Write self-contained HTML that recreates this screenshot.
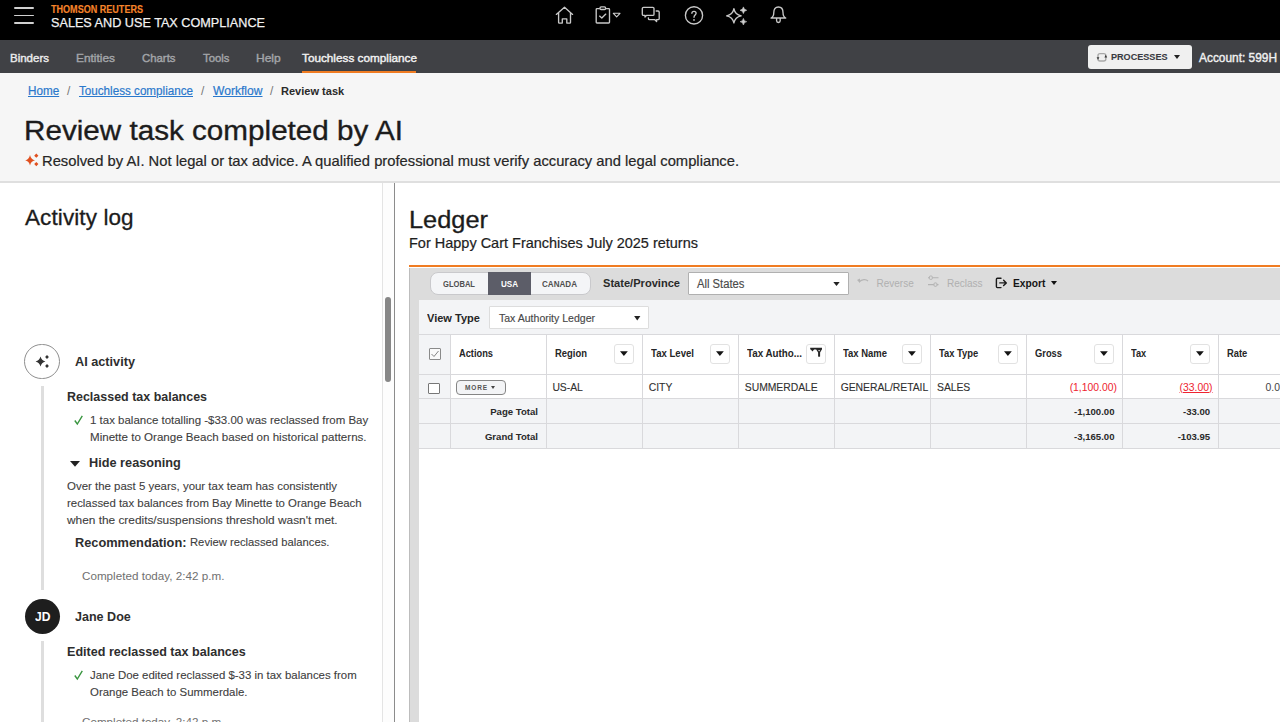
<!DOCTYPE html>
<html><head><meta charset="utf-8">
<style>
*{box-sizing:border-box;margin:0;padding:0}
html,body{width:1280px;height:722px;overflow:hidden;background:#fff;font-family:"Liberation Sans",sans-serif;color:#222}
.t{position:absolute;line-height:1;white-space:nowrap}
.r{position:absolute}
svg{position:absolute;overflow:visible}
</style></head><body>
<div class="r" style="left:0px;top:0px;width:1280px;height:40px;background:#000;"></div>
<div class="r" style="left:14px;top:6.8px;width:20px;height:1.8px;background:#d0d0d0;border-radius:1px"></div>
<div class="r" style="left:14px;top:14.6px;width:20px;height:1.8px;background:#d0d0d0;border-radius:1px"></div>
<div class="r" style="left:14px;top:22.4px;width:20px;height:1.8px;background:#d0d0d0;border-radius:1px"></div>
<div class="t" style="left:51px;top:3.91px;font-size:10.5px;color:#f5842a;font-weight:bold;letter-spacing:0px;-webkit-text-stroke:0.15px #f5842a;transform:scaleX(0.8617);transform-origin:left 0">THOMSON REUTERS</div>
<div class="t" style="left:51px;top:16.17px;font-size:13.5px;color:#f2f2f2;font-weight:normal;letter-spacing:0px;-webkit-text-stroke:0.25px #f2f2f2;transform:scaleX(0.9372);transform-origin:left 0">SALES AND USE TAX COMPLIANCE</div>
<svg style="left:550px;top:0px" width="30" height="30" viewBox="550 0 30 30"><path fill="none" stroke="#c8c8c8" stroke-width="1.35" stroke-linejoin="round" stroke-linecap="round" d="M556.3 14.4 L564.5 7.3 L572.6 14.4 M558.6 12.6 V22.4 Q558.6 23.1 559.3 23.1 H562.3 V18.9 H566.8 V23.1 H569.8 Q570.5 23.1 570.5 22.4 V12.6"/></svg><svg style="left:590px;top:0px" width="36" height="30" viewBox="590 0 36 30"><path fill="none" stroke="#c8c8c8" stroke-width="1.35" stroke-linejoin="round" stroke-linecap="round" d="M599.3 8.6 H597 Q596.2 8.6 596.2 9.4 V22.2 Q596.2 23 597 23 H608.7 Q609.5 23 609.5 22.2 V9.4 Q609.5 8.6 608.7 8.6 H606.4"/><rect x="600" y="6.9" width="5.6" height="2.6" rx="1.1" fill="none" stroke="#c8c8c8" stroke-width="1.35" stroke-linejoin="round" stroke-linecap="round"/><path fill="none" stroke="#c8c8c8" stroke-width="1.35" stroke-linejoin="round" stroke-linecap="round" d="M599.6 16.1 L601.8 18 L605.8 14.1"/><path d="M613.3 13.3 H620 L616.65 16.8 Z" fill="none" stroke="#cfcfcf" stroke-width="1.1" stroke-linejoin="round"/></svg><svg style="left:636px;top:0px" width="30" height="30" viewBox="636 0 30 30"><path fill="none" stroke="#c8c8c8" stroke-width="1.35" stroke-linejoin="round" stroke-linecap="round" d="M643.5 7.3 H652.8 Q654 7.3 654 8.5 V14.2 Q654 15.4 652.8 15.4 H646.5 L645 17 V15.4 H643.5 Q642.3 15.4 642.3 14.2 V8.5 Q642.3 7.3 643.5 7.3 Z M656.2 11 H658 Q659.2 11 659.2 12.2 V18.4 Q659.2 19.6 658 19.6 H656.6 V21.6 L654.6 19.6 H649.6 Q648.4 19.6 648.4 18.4 V17.8"/></svg><svg style="left:680px;top:0px" width="30" height="30" viewBox="680 0 30 30"><circle cx="694" cy="15.4" r="8.6" fill="none" stroke="#c8c8c8" stroke-width="1.35" stroke-linejoin="round" stroke-linecap="round"/><path fill="none" stroke="#c8c8c8" stroke-width="1.35" stroke-linejoin="round" stroke-linecap="round" d="M691.9 13.3 C691.9 10.7 696.1 10.7 696.1 13.3 C696.1 15 694 15.1 694 17.2"/><circle cx="694" cy="19.9" r="0.85" fill="#cfcfcf"/></svg><svg style="left:720px;top:0px" width="30" height="30" viewBox="720 0 30 30"><path fill="none" stroke="#c8c8c8" stroke-width="1.35" stroke-linejoin="round" stroke-linecap="round" d="M733.9 8.6 Q735 14.7 741.2 15.8 Q735 16.9 733.9 23 Q732.8 16.9 726.6 15.8 Q732.8 14.7 733.9 8.6 Z"/><path d="M743.4 6.9 Q743.8 9.8 746.7 10.25 Q743.8 10.7 743.4 13.6 Q743 10.7 740.1 10.25 Q743 9.8 743.4 6.9 Z M743.4 18.4 Q743.8 21.3 746.7 21.7 Q743.8 22.1 743.4 25 Q743 22.1 740.1 21.7 Q743 21.3 743.4 18.4 Z" fill="#cfcfcf" stroke="#cfcfcf" stroke-width="0.6" stroke-linejoin="round"/></svg><svg style="left:765px;top:0px" width="30" height="30" viewBox="765 0 30 30"><path fill="none" stroke="#c8c8c8" stroke-width="1.35" stroke-linejoin="round" stroke-linecap="round" d="M771 18 Q773.8 16.6 773.8 12.4 Q773.8 7 778.4 7 Q783 7 783 12.4 Q783 16.6 785.8 18 Z M776.6 18.3 V20.7 A1.8 1.8 0 0 0 780.2 20.7 V18.3"/></svg><div class="r" style="left:0px;top:40px;width:1280px;height:33.3px;background:#404145;"></div>
<div class="t" style="left:10px;top:52.38px;font-size:11.6px;color:#ececec;font-weight:normal;letter-spacing:0px;-webkit-text-stroke:0.4px #ececec;transform:scaleX(0.9921);transform-origin:left 0">Binders</div>
<div class="t" style="left:76px;top:52.38px;font-size:11.6px;color:#a3a5a9;font-weight:normal;letter-spacing:0px;-webkit-text-stroke:0.4px #a3a5a9;transform:scaleX(1.0255);transform-origin:left 0">Entities</div>
<div class="t" style="left:142px;top:52.38px;font-size:11.6px;color:#a3a5a9;font-weight:normal;letter-spacing:0px;-webkit-text-stroke:0.4px #a3a5a9;transform:scaleX(0.9808);transform-origin:left 0">Charts</div>
<div class="t" style="left:203px;top:52.38px;font-size:11.6px;color:#a3a5a9;font-weight:normal;letter-spacing:0px;-webkit-text-stroke:0.4px #a3a5a9;transform:scaleX(0.9786);transform-origin:left 0">Tools</div>
<div class="t" style="left:256px;top:52.38px;font-size:11.6px;color:#a3a5a9;font-weight:normal;letter-spacing:0px;-webkit-text-stroke:0.4px #a3a5a9;transform:scaleX(1.0373);transform-origin:left 0">Help</div>
<div class="t" style="left:302px;top:52.38px;font-size:11.6px;color:#f2f2f2;font-weight:normal;letter-spacing:0px;-webkit-text-stroke:0.4px #f2f2f2;transform:scaleX(1.0139);transform-origin:left 0">Touchless compliance</div>
<div class="r" style="left:302px;top:71px;width:114px;height:3px;background:#f07c22;"></div>
<div class="r" style="left:1088px;top:45px;width:104px;height:24px;background:#f0f0f0;border-radius:3px"></div>
<svg style="left:1090px;top:46px" width="20" height="20" viewBox="1090 46 20 20"><rect x="1098" y="53.6" width="7.8" height="7.4" rx="2" fill="none" stroke="#a8a8a8" stroke-width="1.4"/><path d="M1096.6 57.2 L1099.4 57.2 L1098 59.8 Z M1104.4 57.4 L1107.2 57.4 L1105.8 54.8 Z" fill="#3a3a3a"/></svg><div class="t" style="left:1111px;top:52.88px;font-size:9px;color:#3a3b42;font-weight:bold;letter-spacing:0px;-webkit-text-stroke:0.1px #3a3b42;transform:scaleX(1.0084);transform-origin:left 0">PROCESSES</div>
<svg style="left:1173.5px;top:55px" width="6" height="4" viewBox="0 0 6 4"><path d="M0 0 H6 L3 4 Z" fill="#222"/></svg>
<div class="t" style="left:1198.8px;top:52.22px;font-size:12.5px;color:#f0f0f0;font-weight:normal;letter-spacing:0px;-webkit-text-stroke:0.4px #f0f0f0;transform:scaleX(0.9512);transform-origin:left 0">Account: 599H</div>
<div class="r" style="left:0px;top:73px;width:1280px;height:109px;background:#f6f6f6;"></div>
<div class="r" style="left:0px;top:181.4px;width:1280px;height:1.3px;background:#dfdfdf;"></div>
<div class="t" style="left:28.2px;top:85.44px;font-size:12px;color:#2a78cc;font-weight:normal;letter-spacing:0px;text-decoration:underline;-webkit-text-stroke:0.2px #2a78cc;transform:scaleX(0.9745);transform-origin:left 0">Home</div>
<div class="t" style="left:67px;top:85.44px;font-size:12px;color:#777;font-weight:normal;letter-spacing:0px;">/</div>
<div class="t" style="left:79px;top:85.44px;font-size:12px;color:#2a78cc;font-weight:normal;letter-spacing:0px;text-decoration:underline;-webkit-text-stroke:0.2px #2a78cc;transform:scaleX(0.9710);transform-origin:left 0">Touchless compliance</div>
<div class="t" style="left:201px;top:85.44px;font-size:12px;color:#777;font-weight:normal;letter-spacing:0px;">/</div>
<div class="t" style="left:212.5px;top:85.44px;font-size:12px;color:#2a78cc;font-weight:normal;letter-spacing:0px;text-decoration:underline;-webkit-text-stroke:0.2px #2a78cc;transform:scaleX(1.0076);transform-origin:left 0">Workflow</div>
<div class="t" style="left:270px;top:85.44px;font-size:12px;color:#777;font-weight:normal;letter-spacing:0px;">/</div>
<div class="t" style="left:281.2px;top:85.87px;font-size:11.5px;color:#2a2a2a;font-weight:bold;letter-spacing:0px;;transform:scaleX(0.9596);transform-origin:left 0">Review task</div>
<div class="t" style="left:24px;top:118.14px;font-size:27px;color:#1c1c1c;font-weight:normal;letter-spacing:0px;-webkit-text-stroke:0.35px #1c1c1c;transform:scaleX(1.0980);transform-origin:left 0">Review task completed by AI</div>
<svg style="left:20px;top:150px" width="22" height="20" viewBox="20 150 22 20"><path d="M30 155 Q30.9 159.4 35 160.3 Q30.9 161.2 30 165.6 Q29.1 161.2 25.2 160.3 Q29.1 159.4 30 155 Z" fill="#e0501f"/><path d="M36.3 153.6 L38.4 155.7 L36.3 157.8 L34.2 155.7 Z M36.3 162 L38.4 164.1 L36.3 166.2 L34.2 164.1 Z" fill="#e0501f"/></svg><div class="t" style="left:42px;top:152.60px;font-size:15px;color:#262626;font-weight:normal;letter-spacing:0px;-webkit-text-stroke:0.2px #262626;transform:scaleX(0.9835);transform-origin:left 0">Resolved by AI. Not legal or tax advice. A qualified professional must verify accuracy and legal compliance.</div>
<div class="r" style="left:0px;top:183px;width:382px;height:539px;background:#fff;"></div>
<div class="r" style="left:382px;top:183px;width:1px;height:539px;background:#e4e4e4;"></div>
<div class="r" style="left:383px;top:183px;width:11px;height:539px;background:#fdfdfd;"></div>
<div class="r" style="left:385.3px;top:297.2px;width:5.6px;height:85.2px;background:#878787;border-radius:3px"></div>
<div class="r" style="left:394px;top:183px;width:1px;height:539px;background:#8c8c8c;"></div>
<div class="t" style="left:25px;top:206.95px;font-size:22.5px;color:#1c1c1c;font-weight:normal;letter-spacing:0.1px;-webkit-text-stroke:0.3px #1c1c1c">Activity log</div>
<div class="r" style="left:24.3px;top:343.6px;width:35.8px;height:35.8px;border:1.2px solid #8f8f8f;border-radius:50%;background:#fff"></div>
<svg style="left:35px;top:354px" width="14" height="14" viewBox="0 0 14 14"><path d="M5.5 2.6 Q6.5 6.5 10.4 7.5 Q6.5 8.5 5.5 12.4 Q4.5 8.5 0.6 7.5 Q4.5 6.5 5.5 2.6 Z" fill="#333"/><path d="M12 1 L13.9 3 L12 5 L10.1 3 Z M12 10 L13.9 12 L12 14 L10.1 12 Z" fill="#333"/></svg>
<div class="t" style="left:75px;top:354.77px;font-size:13.5px;color:#2e2e2e;font-weight:bold;letter-spacing:0px;;transform:scaleX(0.9407);transform-origin:left 0">AI activity</div>
<div class="r" style="left:41px;top:386px;width:3px;height:204px;background:#dedede;"></div>
<div class="t" style="left:67px;top:389.87px;font-size:13.5px;color:#2e2e2e;font-weight:bold;letter-spacing:0px;;transform:scaleX(0.9235);transform-origin:left 0">Reclassed tax balances</div>
<svg style="left:74.3px;top:415px" width="9" height="10" viewBox="0 0 9 10"><path d="M0.8 5.5 L3.3 9 L8.3 0.8" fill="none" stroke="#3a9640" stroke-width="1.4"/></svg><div class="t" style="left:90px;top:414.77px;font-size:11.5px;color:#404040;font-weight:normal;letter-spacing:0px;-webkit-text-stroke:0.1px #404040;transform:scaleX(0.9981);transform-origin:left 0">1 tax balance totalling -$33.00 was reclassed from Bay</div>
<div class="t" style="left:90px;top:431.77px;font-size:11.5px;color:#404040;font-weight:normal;letter-spacing:0px;-webkit-text-stroke:0.1px #404040;transform:scaleX(1.0062);transform-origin:left 0">Minette to Orange Beach based on historical patterns.</div>
<svg style="left:69.5px;top:461px" width="10" height="6" viewBox="0 0 10 6"><path d="M0 0 H10 L5 5.8 Z" fill="#222"/></svg>
<div class="t" style="left:88.5px;top:456.07px;font-size:13.5px;color:#2e2e2e;font-weight:bold;letter-spacing:0px;;transform:scaleX(0.9423);transform-origin:left 0">Hide reasoning</div>
<div class="t" style="left:67px;top:481.07px;font-size:11.5px;color:#404040;font-weight:normal;letter-spacing:0px;-webkit-text-stroke:0.1px #404040;transform:scaleX(0.9963);transform-origin:left 0">Over the past 5 years, your tax team has consistently</div>
<div class="t" style="left:67px;top:497.87px;font-size:11.5px;color:#404040;font-weight:normal;letter-spacing:0px;-webkit-text-stroke:0.1px #404040;transform:scaleX(0.9911);transform-origin:left 0">reclassed tax balances from Bay Minette to Orange Beach</div>
<div class="t" style="left:67px;top:514.67px;font-size:11.5px;color:#404040;font-weight:normal;letter-spacing:0px;-webkit-text-stroke:0.1px #404040;transform:scaleX(1.0313);transform-origin:left 0">when the credits/suspensions threshold wasn't met.</div>
<div class="t" style="left:75px;top:535.70px;font-size:13px;color:#2e2e2e;font-weight:bold;letter-spacing:0px;;transform:scaleX(0.9832);transform-origin:left 0">Recommendation:</div>
<div class="t" style="left:190px;top:536.97px;font-size:11.5px;color:#404040;font-weight:normal;letter-spacing:0px;-webkit-text-stroke:0.1px #404040;transform:scaleX(0.9779);transform-origin:left 0">Review reclassed balances.</div>
<div class="t" style="left:81.5px;top:570.97px;font-size:11.5px;color:#707070;font-weight:normal;letter-spacing:0px;;transform:scaleX(1.0141);transform-origin:left 0">Completed today, 2:42 p.m.</div>
<div class="r" style="left:24.5px;top:598.5px;width:35px;height:35px;border-radius:50%;background:#1e1e1e"></div>
<div class="t" style="left:34.5px;top:611.14px;font-size:12px;color:#fff;font-weight:bold;letter-spacing:0px;;transform:scaleX(1.0102);transform-origin:left 0">JD</div>
<div class="t" style="left:75px;top:609.57px;font-size:13.5px;color:#2e2e2e;font-weight:bold;letter-spacing:0px;;transform:scaleX(0.9295);transform-origin:left 0">Jane Doe</div>
<div class="r" style="left:41px;top:641px;width:3px;height:81px;background:#dedede;"></div>
<div class="t" style="left:67px;top:644.57px;font-size:13.5px;color:#2e2e2e;font-weight:bold;letter-spacing:0px;;transform:scaleX(0.9307);transform-origin:left 0">Edited reclassed tax balances</div>
<svg style="left:74.3px;top:670px" width="9" height="10" viewBox="0 0 9 10"><path d="M0.8 5.5 L3.3 9 L8.3 0.8" fill="none" stroke="#3a9640" stroke-width="1.4"/></svg><div class="t" style="left:90px;top:669.77px;font-size:11.5px;color:#404040;font-weight:normal;letter-spacing:0px;-webkit-text-stroke:0.1px #404040;transform:scaleX(0.9933);transform-origin:left 0">Jane Doe edited reclassed $-33 in tax balances from</div>
<div class="t" style="left:90px;top:686.57px;font-size:11.5px;color:#404040;font-weight:normal;letter-spacing:0px;-webkit-text-stroke:0.1px #404040;transform:scaleX(0.9935);transform-origin:left 0">Orange Beach to Summerdale.</div>
<div class="t" style="left:81.5px;top:717.27px;font-size:11.5px;color:#707070;font-weight:normal;letter-spacing:0px;;transform:scaleX(1.0141);transform-origin:left 0">Completed today, 2:42 p.m.</div>
<div class="r" style="left:396px;top:183px;width:884px;height:539px;background:#fff;"></div>
<div class="t" style="left:408.5px;top:208.53px;font-size:23px;color:#1c1c1c;font-weight:normal;letter-spacing:0px;-webkit-text-stroke:0.3px #1c1c1c;transform:scaleX(1.1030);transform-origin:left 0">Ledger</div>
<div class="t" style="left:408.5px;top:236.13px;font-size:14.5px;color:#1e1e1e;font-weight:normal;letter-spacing:0px;-webkit-text-stroke:0.2px #1e1e1e;transform:scaleX(0.9989);transform-origin:left 0">For Happy Cart Franchises July 2025 returns</div>
<div class="r" style="left:408.7px;top:265.2px;width:872px;height:2.3px;background:#f07c22;"></div>
<div class="r" style="left:409px;top:267.6px;width:871px;height:454.4px;background:#dcdcdc;"></div>
<div class="r" style="left:409px;top:267.6px;width:1px;height:454.4px;background:#bdbdbd;"></div>
<div class="r" style="left:419px;top:300px;width:861px;height:422px;background:#fff;"></div>
<div class="r" style="left:419px;top:300px;width:861px;height:34px;background:#f3f4f6;"></div>
<div class="r" style="left:429.8px;top:271.7px;width:160.8px;height:23.7px;background:#f4f5f7;border:1px solid #c9c9cc;border-radius:8px"></div>
<div class="r" style="left:488px;top:271.7px;width:43px;height:23.7px;background:#5c5d68;"></div>
<div class="t" style="left:443px;top:279.60px;font-size:8.5px;color:#505050;font-weight:bold;letter-spacing:0px;;transform:scaleX(0.8916);transform-origin:left 0">GLOBAL</div>
<div class="t" style="left:500.6px;top:279.60px;font-size:8.5px;color:#fff;font-weight:bold;letter-spacing:0px;;transform:scaleX(0.9469);transform-origin:left 0">USA</div>
<div class="t" style="left:542.4px;top:279.60px;font-size:8.5px;color:#505050;font-weight:bold;letter-spacing:0px;;transform:scaleX(0.9500);transform-origin:left 0">CANADA</div>
<div class="t" style="left:603.4px;top:277.99px;font-size:11px;color:#2a2a2a;font-weight:bold;letter-spacing:0px;;transform:scaleX(1.0076);transform-origin:left 0">State/Province</div>
<div class="r" style="left:688.4px;top:271.6px;width:160.4px;height:23.9px;background:#fff;border:1.2px solid #b0b0b0;border-radius:1px"></div>
<div class="t" style="left:697px;top:277.84px;font-size:12px;color:#4a4a4a;font-weight:normal;letter-spacing:0px;-webkit-text-stroke:0.15px #4a4a4a;transform:scaleX(0.9368);transform-origin:left 0">All States</div>
<svg style="left:833.3px;top:281.6px" width="7" height="4" viewBox="0 0 8 5"><path d="M0 0 H8 L4 5 Z" fill="#222"/></svg>
<svg style="left:857px;top:278px" width="12" height="8" viewBox="0 0 12 8"><path d="M2 4 C5 1 9 1 11 3" fill="none" stroke="#b5b5b5" stroke-width="1.2"/><path d="M0 2 L3 0.5 L3 5 Z" fill="#b5b5b5"/></svg>
<div class="t" style="left:876.5px;top:278.54px;font-size:10px;color:#b0b0b0;font-weight:normal;letter-spacing:0px;">Reverse</div>
<svg style="left:920px;top:270px" width="25" height="22" viewBox="920 270 25 22"><path d="M928 277.7 H929.3 M932.4 277.7 H938.5 M928 284.6 H933.9 M937 284.6 H938.5" stroke="#b3b3b3" stroke-width="1.1" fill="none"/><rect x="929.4" y="276" width="2.9" height="3.4" rx="1" fill="none" stroke="#b3b3b3" stroke-width="1"/><rect x="934" y="282.9" width="2.9" height="3.4" rx="1" fill="none" stroke="#b3b3b3" stroke-width="1"/></svg><div class="t" style="left:947px;top:278.54px;font-size:10px;color:#b0b0b0;font-weight:normal;letter-spacing:0px;">Reclass</div>
<svg style="left:990px;top:270px" width="25" height="22" viewBox="990 270 25 22"><path d="M1001 278.2 H997.4 Q996.4 278.2 996.4 279.2 V286.6 Q996.4 287.6 997.4 287.6 H1001" fill="none" stroke="#1a1a1a" stroke-width="1.4" stroke-linecap="round"/><path d="M999.8 282.9 H1006.3 M1003.6 280.2 L1006.3 282.9 L1003.6 285.6" fill="none" stroke="#1a1a1a" stroke-width="1.4" stroke-linecap="round" stroke-linejoin="round"/></svg><div class="t" style="left:1012.5px;top:279.47px;font-size:10.2px;color:#151515;font-weight:bold;letter-spacing:0px;;transform:scaleX(1.0011);transform-origin:left 0">Export</div>
<svg style="left:1050.5px;top:280.5px" width="6" height="4" viewBox="0 0 6 4"><path d="M0 0 H6 L3 4 Z" fill="#111"/></svg>
<div class="t" style="left:427px;top:313.29px;font-size:11px;color:#262626;font-weight:bold;letter-spacing:0px;;transform:scaleX(1.0038);transform-origin:left 0">View Type</div>
<div class="r" style="left:489.3px;top:305.6px;width:159.5px;height:23.8px;background:#fff;border:1px solid #dddddd;border-radius:1px"></div>
<div class="t" style="left:498.6px;top:312.51px;font-size:10.5px;color:#484848;font-weight:normal;letter-spacing:0px;-webkit-text-stroke:0.15px #484848;transform:scaleX(1.0028);transform-origin:left 0">Tax Authority Ledger</div>
<svg style="left:633.5px;top:316px" width="6.5" height="4.5" viewBox="0 0 7 5"><path d="M0 0 H7 L3.5 5 Z" fill="#222"/></svg>
<div class="r" style="left:419px;top:334px;width:861px;height:40px;background:#fff;"></div>
<div class="r" style="left:419px;top:334px;width:31px;height:40px;background:#f3f4f6;"></div>
<div class="r" style="left:419px;top:374px;width:861px;height:24px;background:#fff;"></div>
<div class="r" style="left:419px;top:374px;width:31px;height:24px;background:#f3f4f6;"></div>
<div class="r" style="left:419px;top:398px;width:861px;height:50.5px;background:#f3f4f6;"></div>
<div class="r" style="left:419px;top:334px;width:861px;height:1px;background:#d9d9dc;"></div>
<div class="r" style="left:419px;top:374px;width:861px;height:1px;background:#d9d9dc;"></div>
<div class="r" style="left:419px;top:398px;width:861px;height:1px;background:#d9d9dc;"></div>
<div class="r" style="left:419px;top:423px;width:861px;height:1px;background:#d9d9dc;"></div>
<div class="r" style="left:419px;top:447.8px;width:861px;height:1px;background:#d9d9dc;"></div>
<div class="r" style="left:450px;top:334px;width:1px;height:114.5px;background:#d9d9dc;"></div>
<div class="r" style="left:546px;top:334px;width:1px;height:114.5px;background:#d9d9dc;"></div>
<div class="r" style="left:642px;top:334px;width:1px;height:114.5px;background:#d9d9dc;"></div>
<div class="r" style="left:738px;top:334px;width:1px;height:114.5px;background:#d9d9dc;"></div>
<div class="r" style="left:834px;top:334px;width:1px;height:114.5px;background:#d9d9dc;"></div>
<div class="r" style="left:930px;top:334px;width:1px;height:114.5px;background:#d9d9dc;"></div>
<div class="r" style="left:1026px;top:334px;width:1px;height:114.5px;background:#d9d9dc;"></div>
<div class="r" style="left:1122px;top:334px;width:1px;height:114.5px;background:#d9d9dc;"></div>
<div class="r" style="left:1218px;top:334px;width:1px;height:114.5px;background:#d9d9dc;"></div>
<div class="r" style="left:1314px;top:334px;width:1px;height:114.5px;background:#d9d9dc;"></div>
<div class="t" style="left:459.4px;top:348.54px;font-size:10px;color:#262626;font-weight:bold;letter-spacing:0px;;transform:scaleX(0.9271);transform-origin:left 0">Actions</div>
<div class="t" style="left:555px;top:348.54px;font-size:10px;color:#262626;font-weight:bold;letter-spacing:0px;;transform:scaleX(0.9442);transform-origin:left 0">Region</div>
<div class="t" style="left:650.7px;top:348.54px;font-size:10px;color:#262626;font-weight:bold;letter-spacing:0px;;transform:scaleX(0.9589);transform-origin:left 0">Tax Level</div>
<div class="t" style="left:747.2px;top:348.54px;font-size:10px;color:#262626;font-weight:bold;letter-spacing:0px;;transform:scaleX(0.9802);transform-origin:left 0">Tax Autho...</div>
<div class="t" style="left:843.3px;top:348.54px;font-size:10px;color:#262626;font-weight:bold;letter-spacing:0px;;transform:scaleX(0.9459);transform-origin:left 0">Tax Name</div>
<div class="t" style="left:939.4px;top:348.54px;font-size:10px;color:#262626;font-weight:bold;letter-spacing:0px;;transform:scaleX(0.9385);transform-origin:left 0">Tax Type</div>
<div class="t" style="left:1035.2px;top:348.54px;font-size:10px;color:#262626;font-weight:bold;letter-spacing:0px;;transform:scaleX(0.9341);transform-origin:left 0">Gross</div>
<div class="t" style="left:1131.3px;top:348.54px;font-size:10px;color:#262626;font-weight:bold;letter-spacing:0px;;transform:scaleX(0.9212);transform-origin:left 0">Tax</div>
<div class="t" style="left:1227.2px;top:348.54px;font-size:10px;color:#262626;font-weight:bold;letter-spacing:0px;;transform:scaleX(0.9360);transform-origin:left 0">Rate</div>
<div class="r" style="left:614.3px;top:344px;width:19.5px;height:19.5px;background:#fff;border:1px solid #e2e2e2;border-radius:3px"></div>
<svg style="left:620.2px;top:350.6px" width="7.8" height="5.3" viewBox="0 0 8 5"><path d="M0 0 H8 L4 5 Z" fill="#141414"/></svg>
<div class="r" style="left:710.3px;top:344px;width:19.5px;height:19.5px;background:#fff;border:1px solid #e2e2e2;border-radius:3px"></div>
<svg style="left:716.2px;top:350.6px" width="7.8" height="5.3" viewBox="0 0 8 5"><path d="M0 0 H8 L4 5 Z" fill="#141414"/></svg>
<div class="r" style="left:806.3px;top:344px;width:19.5px;height:19.5px;background:#fff;border:1px solid #e2e2e2;border-radius:3px"></div>
<svg style="left:800px;top:340px" width="30" height="26" viewBox="800 340 30 26"><path d="M810.2 347.8 H822 V349.5 H810.2 Z M810.6 349.3 L814.3 349.3 L812.45 351.4 Z M816 349.3 H822 L820.1 352.6 V356.4 Q819.1 357 818.1 356.4 V352.6 Z" fill="#262626"/><path d="M818.2 350 H820 L819.1 351.6 Z" fill="#fff"/></svg><div class="r" style="left:902.3px;top:344px;width:19.5px;height:19.5px;background:#fff;border:1px solid #e2e2e2;border-radius:3px"></div>
<svg style="left:908.2px;top:350.6px" width="7.8" height="5.3" viewBox="0 0 8 5"><path d="M0 0 H8 L4 5 Z" fill="#141414"/></svg>
<div class="r" style="left:998.3px;top:344px;width:19.5px;height:19.5px;background:#fff;border:1px solid #e2e2e2;border-radius:3px"></div>
<svg style="left:1004.2px;top:350.6px" width="7.8" height="5.3" viewBox="0 0 8 5"><path d="M0 0 H8 L4 5 Z" fill="#141414"/></svg>
<div class="r" style="left:1094.3px;top:344px;width:19.5px;height:19.5px;background:#fff;border:1px solid #e2e2e2;border-radius:3px"></div>
<svg style="left:1100.2px;top:350.6px" width="7.8" height="5.3" viewBox="0 0 8 5"><path d="M0 0 H8 L4 5 Z" fill="#141414"/></svg>
<div class="r" style="left:1190.3px;top:344px;width:19.5px;height:19.5px;background:#fff;border:1px solid #e2e2e2;border-radius:3px"></div>
<svg style="left:1196.2px;top:350.6px" width="7.8" height="5.3" viewBox="0 0 8 5"><path d="M0 0 H8 L4 5 Z" fill="#141414"/></svg>
<div class="r" style="left:429px;top:348px;width:12px;height:12px;border:1px solid #8a8a8a;border-radius:1px;background:#fafafa"></div>
<svg style="left:431px;top:350px" width="8" height="8" viewBox="0 0 8 8"><path d="M0.5 4 L3 6.5 L7.5 1" fill="none" stroke="#777" stroke-width="0.9"/></svg>
<div class="r" style="left:428px;top:382.5px;width:12px;height:11.5px;border:1px solid #777;border-radius:1px;background:#fff"></div>
<div class="r" style="left:456.4px;top:380.2px;width:49.4px;height:14.6px;border:1.2px solid #858585;border-radius:4px;background:#f3f4f6"></div>
<div class="t" style="left:465px;top:384.80px;font-size:6.5px;color:#555;font-weight:bold;letter-spacing:0.9px;">MORE</div>
<svg style="left:490.5px;top:386px" width="4" height="3" viewBox="0 0 4 3"><path d="M0 0 H4 L2 3 Z" fill="#444"/></svg>
<div class="t" style="left:552.4px;top:382.90px;font-size:10.4px;color:#2f2f2f;font-weight:normal;letter-spacing:-0.05px;-webkit-text-stroke:0.1px #333">US-AL</div>
<div class="t" style="left:648.8px;top:382.90px;font-size:10.4px;color:#2f2f2f;font-weight:normal;letter-spacing:-0.05px;-webkit-text-stroke:0.1px #333">CITY</div>
<div class="t" style="left:744.8px;top:382.90px;font-size:10.4px;color:#2f2f2f;font-weight:normal;letter-spacing:-0.05px;-webkit-text-stroke:0.1px #333">SUMMERDALE</div>
<div class="t" style="left:840.7px;top:382.90px;font-size:10.4px;color:#2f2f2f;font-weight:normal;letter-spacing:-0.05px;-webkit-text-stroke:0.1px #333">GENERAL/RETAIL</div>
<div class="t" style="left:937px;top:382.90px;font-size:10.4px;color:#2f2f2f;font-weight:normal;letter-spacing:-0.05px;-webkit-text-stroke:0.1px #333">SALES</div>
<div class="t" style="right:163px;top:382.70px;font-size:10.4px;color:#ee2430;font-weight:normal;letter-spacing:0px;">(1,100.00)</div>
<div class="t" style="right:67.5px;top:382.70px;font-size:10.4px;color:#ee2430;font-weight:normal;letter-spacing:0px;text-decoration:underline">(33.00)</div>
<div class="t" style="left:1265.5px;top:382.70px;font-size:10.4px;color:#444;font-weight:normal;letter-spacing:0px;">0.0</div>
<div class="t" style="right:742px;top:406.87px;font-size:9.6px;color:#2a2a2a;font-weight:bold;letter-spacing:0px;">Page Total</div>
<div class="t" style="right:742px;top:431.57px;font-size:9.6px;color:#2a2a2a;font-weight:bold;letter-spacing:0px;">Grand Total</div>
<div class="t" style="right:165.5px;top:406.87px;font-size:9.6px;color:#2a2a2a;font-weight:bold;letter-spacing:0px;">-1,100.00</div>
<div class="t" style="right:69.79999999999995px;top:406.87px;font-size:9.6px;color:#2a2a2a;font-weight:bold;letter-spacing:0px;">-33.00</div>
<div class="t" style="right:165.5px;top:431.57px;font-size:9.6px;color:#2a2a2a;font-weight:bold;letter-spacing:0px;">-3,165.00</div>
<div class="t" style="right:69.79999999999995px;top:431.57px;font-size:9.6px;color:#2a2a2a;font-weight:bold;letter-spacing:0px;">-103.95</div>
</body></html>
